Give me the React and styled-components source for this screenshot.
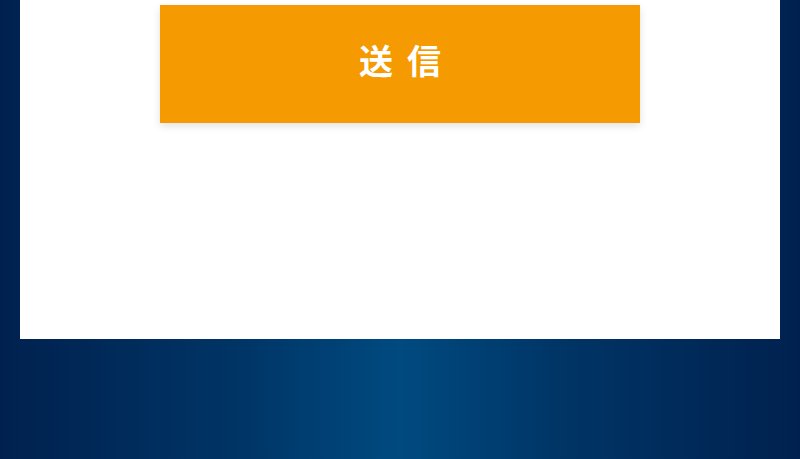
import React from "react";
import styled, { createGlobalStyle } from "styled-components";

const Global = createGlobalStyle`
  html, body { margin: 0; padding: 0; }
  body {
    font-family: "Noto Sans CJK JP", "Noto Sans", sans-serif;
    background: linear-gradient(90deg, #00214f 0%, #003566 30%, #004a80 50%, #003566 70%, #00214f 100%);
    min-height: 459px;
  }
`;

const Page = styled.div`
  display: flex;
  flex-direction: column;
  padding: 0 20px;
  min-height: 459px;
  box-sizing: border-box;
`;

const Card = styled.section`
  background: #ffffff;
  height: 339px;
  padding-top: 5px;
  box-sizing: border-box;
  display: flex;
  flex-direction: column;
  align-items: center;
`;

const SubmitButton = styled.button`
  width: 480px;
  height: 118px;
  border: none;
  background: #f59a00;
  color: #ffffff;
  font-family: "Noto Sans CJK JP", sans-serif;
  font-weight: 700;
  font-size: 34px;
  letter-spacing: 14px;
  padding: 0 0 10px 14px;
  box-shadow: 0 3px 8px rgba(0, 0, 0, 0.12);
  cursor: pointer;
`;

export default function App() {
  return (
    <>
      <Global />
      <Page>
        <Card>
          <SubmitButton type="submit">送信</SubmitButton>
        </Card>
      </Page>
    </>
  );
}
